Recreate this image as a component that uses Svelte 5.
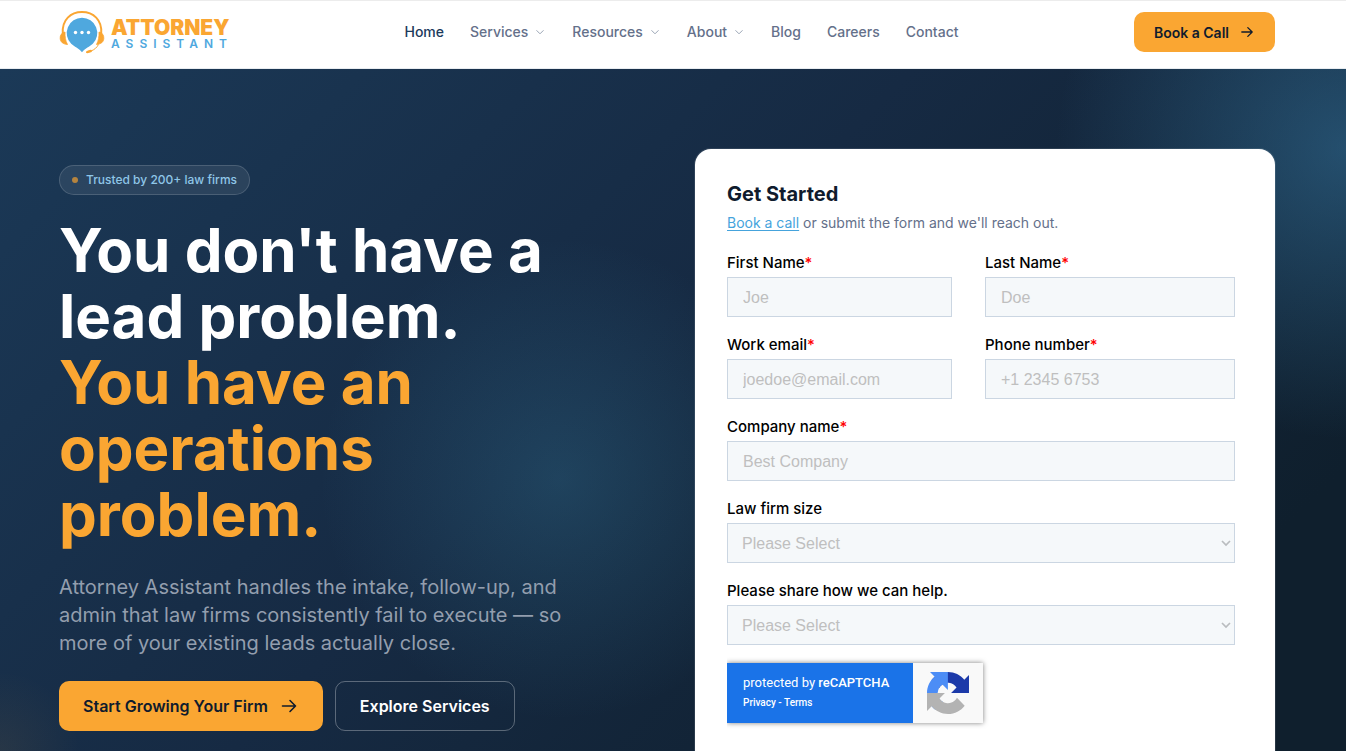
<script>
  const nav = [
    { label: 'Home', active: true },
    { label: 'Services', menu: true },
    { label: 'Resources', menu: true },
    { label: 'About', menu: true },
    { label: 'Blog' },
    { label: 'Careers' },
    { label: 'Contact' }
  ];

  const fields = [
    { id: 'first', label: 'First Name', hint: 'Joe', type: 'text', required: true },
    { id: 'last', label: 'Last Name', hint: 'Doe', type: 'text', required: true },
    { id: 'email', label: 'Work email', hint: 'joedoe@email.com', type: 'email', required: true },
    { id: 'phone', label: 'Phone number', hint: '+1 2345 6753', type: 'tel', required: true },
    { id: 'company', label: 'Company name', hint: 'Best Company', type: 'text', required: true, wide: true }
  ];

  const selects = [
    { id: 'size', label: 'Law firm size' },
    { id: 'help', label: 'Please share how we can help.' }
  ];
</script>

{#snippet arrow(size)}
  <svg width={size} height={size} viewBox="0 0 20 20" fill="none" stroke="currentColor" stroke-width="1.6" stroke-linecap="round" stroke-linejoin="round" aria-hidden="true">
    <path d="M3.500 10h13M11 4.500l5.500 5.500-5.500 5.500" />
  </svg>
{/snippet}

<div class="page">
  <header>
    <div class="container bar">
      <a class="logo" href="#home">
        <svg width="46" height="44" viewBox="0 0 46 44" aria-hidden="true">
          <path d="M23 7.700a15.300 15.300 0 0 1 10.800 26.100C30.500 37 26.500 38 23 42.300C19.500 38 15.500 37 12.200 33.800A15.300 15.300 0 0 1 23 7.700Z" fill="#4fa8de" />
          <path d="M3.800 24C2.500 9.500 12 2.100 23 2.100S43.500 9.500 42.200 24" fill="none" stroke="#faa632" stroke-width="2" />
          <path d="M6 22C2.500 22.500 1 25.500 1.200 28.500c.3 3.500 2.500 5.500 7.300 6C6.500 31 5.800 26.500 6 22ZM40 22c3.500.5 5 3.500 4.800 6.500-.3 3.500-2.500 5.500-7.300 6 2-3.500 2.700-8 2.500-12.500Z" fill="#faa632" stroke="#faa632" stroke-width=".8" stroke-linejoin="round" />
          <path d="M39.500 34.500c-1.500 3-4 5-7 6.300" fill="none" stroke="#faa632" stroke-width="1" />
          <ellipse cx="30" cy="41.500" rx="3.200" ry="1.400" transform="rotate(-15 30 41.500)" fill="#faa632" />
          <g fill="#fff"><circle cx="16.500" cy="22.500" r="1.700" /><circle cx="23" cy="22.500" r="1.700" /><circle cx="29.500" cy="22.500" r="1.700" /></g>
        </svg>
        <span class="wordmark"><b>ATTORNEY</b><span>ASSISTANT</span></span>
      </a>
      <nav>
        {#each nav as item}
          <a href="#{item.label.toLowerCase()}" class:active={item.active}>
            {item.label}
            {#if item.menu}
              <svg width="12" height="12" viewBox="0 0 12 12" fill="none" stroke="currentColor" aria-hidden="true"><path d="M2.500 4.300 6 7.800 9.500 4.300" /></svg>
            {/if}
          </a>
        {/each}
      </nav>
      <a class="call" href="#call">Book a Call {@render arrow(16)}</a>
    </div>
  </header>

  <main>
    <div class="container hero">
      <section class="pitch">
        <p class="badge"><i></i>Trusted by 200+ law firms</p>
        <h1>You don't have a<br />lead problem.<br /><em>You have an<br />operations<br />problem.</em></h1>
        <p class="lead">Attorney Assistant handles the intake, follow-up, and admin that law firms consistently fail to execute — so more of your existing leads actually close.</p>
        <div class="actions">
          <a class="primary" href="#start">Start Growing Your Firm {@render arrow(20)}</a>
          <a class="secondary" href="#services">Explore Services</a>
        </div>
      </section>

      <section class="card">
        <h2>Get Started</h2>
        <p class="note"><a href="#call">Book a call</a> or submit the form and we'll reach out.</p>
        <form>
          {#each fields as f}
            <div class="field" class:wide={f.wide}>
              <label for={f.id}>{f.label}<span>*</span></label>
              <input id={f.id} type={f.type} placeholder={f.hint} required={f.required} />
            </div>
          {/each}
          {#each selects as s}
            <div class="field wide">
              <label for={s.id}>{s.label}</label>
              <div class="select">
                <select id={s.id}><option>Please Select</option></select>
                <svg width="10" height="8" viewBox="0 0 10 8" fill="none" stroke="#b9bcbf" stroke-width="1.700" aria-hidden="true"><path d="M1 2l4 4 4-4" /></svg>
              </div>
            </div>
          {/each}
        </form>
        <div class="captcha">
          <div class="terms">
            <p>protected by <strong>reCAPTCHA</strong></p>
            <small><a href="#privacy">Privacy</a> - <a href="#terms">Terms</a></small>
          </div>
          <div class="mark">
            <svg width="42" height="42" viewBox="0 0 64 64" aria-hidden="true">
              <path d="M64 31.955l-.033-1.370V4.687l-7.160 7.160C50.948 4.674 42.033.093 32.050.093c-10.400 0-19.622 4.960-25.458 12.640l11.736 11.860a15.550 15.550 0 0 1 4.754-5.334c2.050-1.600 4.952-2.906 8.968-2.906.485 0 .86.057 1.135.163 4.976.393 9.288 3.140 11.828 7.124l-8.307 8.307L64 31.953" fill="#1c3aa9" />
              <path d="M31.862.094l-1.370.033H4.594l7.160 7.160C4.580 13.147 0 22.060 0 32.046c0 10.400 4.960 19.622 12.640 25.458L24.500 45.768a15.550 15.550 0 0 1-5.334-4.754c-1.600-2.050-2.906-4.952-2.906-8.968 0-.485.057-.86.163-1.135.393-4.976 3.140-9.288 7.124-11.828l8.307 8.307L31.860.095" fill="#4c8df6" />
              <path d="M.001 32.045l.033 1.370v25.898l7.160-7.160c5.860 7.173 14.774 11.754 24.760 11.754 10.400 0 19.622-4.960 25.458-12.640l-11.736-11.860a15.550 15.550 0 0 1-4.754 5.334c-2.050 1.600-4.952 2.906-8.968 2.906-.485 0-.86-.057-1.135-.163-4.976-.393-9.288-3.140-11.828-7.124l8.307-8.307c-10.522.04-22.400.066-27.295-.005" fill="#b3b3b3" />
            </svg>
          </div>
        </div>
      </section>
    </div>
  </main>
</div>

<style>
  :global(body) { margin: 0; }
  .page, .page * { box-sizing: border-box; }
  .page {
    min-height: 100vh;
    display: flex;
    flex-direction: column;
    font-family: Inter, "Liberation Sans", sans-serif;
    color: #0f1b2d;
  }
  a { color: inherit; text-decoration: none; }
  p, h1, h2 { margin: 0; }
  svg { flex: none; }
  header, main { padding-right: 12px; }
  .container { width: 100%; max-width: 1280px; margin: 0 auto; padding: 0 32px; }

  header { background: #fff; border-top: 1px solid #ececec; border-bottom: 1px solid #e8ecf0; }
  .bar { display: flex; align-items: center; justify-content: space-between; padding-top: 9px; padding-bottom: 14px; }
  .logo { display: flex; align-items: center; gap: 6px; }
  .wordmark { display: flex; flex-direction: column; width: 118px; padding-top: 6px; white-space: nowrap; }
  .wordmark b { font-size: 21px; line-height: 18px; font-weight: 900; color: #faa632; }
  .wordmark span { font-size: 12px; line-height: 14px; font-weight: 600; letter-spacing: 6px; color: #4fa8de; }
  nav { display: flex; gap: 26px; font-size: 14px; line-height: 20px; font-weight: 500; color: #64708a; }
  nav a { display: flex; align-items: center; gap: 6px; }
  nav svg { color: #9aa5b5; }
  nav .active { color: #1b3a5c; }
  .call {
    display: flex; align-items: center; gap: 10px; height: 40px; padding: 0 20px;
    border-radius: 10px; background: #faa632; font-size: 14px; font-weight: 600;
  }

  main {
    flex: 1;
    display: flex;
    background:
      radial-gradient(circle 240px at 560px 410px, rgba(60, 140, 175, .26), transparent),
      radial-gradient(circle 290px at 100% 80px, rgba(65, 145, 195, .4), transparent),
      radial-gradient(circle 80px at 0 100%, rgba(250, 166, 50, .07), transparent),
      linear-gradient(135deg, #1b3957 0%, #162a43 45%, #0f1f2d 86%);
  }
  .hero { display: grid; grid-template-columns: 1fr 1fr; gap: 56px; }
  .pitch { padding: 96px 0 20px; }
  .badge {
    display: flex; align-items: center; gap: 8px; width: fit-content; height: 30px; padding: 0 12px;
    border: 1px solid rgba(255, 255, 255, .15); border-radius: 15px; background: rgba(255, 255, 255, .08);
    font-size: 12px; line-height: 16px; font-weight: 500; color: #8fc6e8;
  }
  .badge i { width: 6px; height: 6px; border-radius: 50%; background: #b5843f; }
  h1 { margin-top: 22px; font-size: 60px; line-height: 66px; font-weight: 700; color: #fff; white-space: nowrap; }
  h1 em { font-style: normal; color: #faa632; }
  .lead { max-width: 520px; margin-top: 26px; font-size: 20px; line-height: 28px; color: #939eae; }
  .actions { display: flex; gap: 12px; margin-top: 24px; }
  .actions a { display: flex; align-items: center; gap: 11px; height: 50px; padding: 0 24px; border-radius: 10px; font-size: 16px; font-weight: 600; }
  .primary { background: #faa632; }
  .actions .secondary { border: 1px solid rgba(255, 255, 255, .3); color: #fff; }

  .card { margin-top: 80px; padding: 32px 40px 28px 32px; border-radius: 16px 16px 0 0; background: #fff; box-shadow: 0 0 0 1px rgba(255, 255, 255, .1); }
  h2 { font-size: 20px; line-height: 26px; font-weight: 700; }
  .note { margin-top: 6px; font-size: 14px; line-height: 20px; color: #64708a; }
  .note a { color: #45a3dc; text-decoration: underline; text-underline-offset: 2px; }
  form { display: grid; grid-template-columns: 9fr 10fr; column-gap: 33px; row-gap: 18px; margin-top: 20px; }
  .wide { grid-column: 1 / -1; }
  label { display: block; height: 24px; font-size: 15px; line-height: 20px; font-weight: 500; color: #000; }
  label span { color: #f00; }
  input, select {
    display: block; width: 100%; height: 40px; margin: 0; padding: 2px 15px 0;
    border: 1px solid #cbd6e2; border-radius: 0; background: #f5f8fa;
    font: 16px "Liberation Sans", Arial, sans-serif; color: #bfbfbf;
  }
  input::placeholder { color: #bfbfbf; opacity: 1; }
  .select { position: relative; }
  select { appearance: none; padding: 0 14px; }
  .select svg { position: absolute; right: 4px; top: 16px; pointer-events: none; }

  .captcha { display: flex; width: 256px; height: 60px; margin-top: 18px; box-shadow: 0 0 5px rgba(0, 0, 0, .5); font-family: Roboto, sans-serif; clip-path: inset(-6px -6px -6px 0); }
  .terms { flex: 1; padding: 10px 16px; background: #1a73e8; color: #fff; }
  .terms p { font-size: 13px; line-height: 20px; }
  .terms strong { font-weight: 500; }
  .terms small { display: block; font-size: 10px; line-height: 20px; font-weight: 500; }
  .mark { display: grid; place-items: center; width: 70px; background: #f9f9f9; }
</style>
